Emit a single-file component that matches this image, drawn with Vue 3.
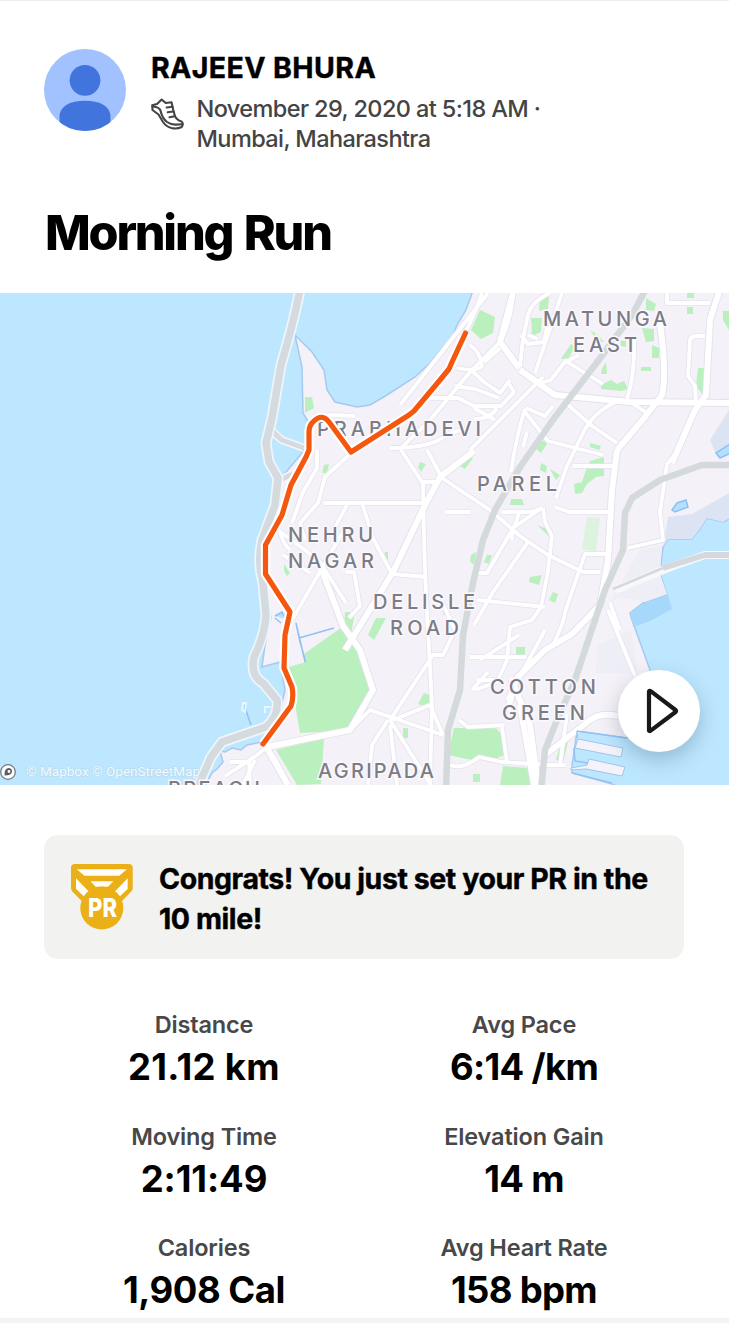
<script setup>
const stats = [
  { label: 'Distance', value: '21.12 km', fit: 'wide' },
  { label: 'Avg Pace', value: '6:14 /km', fit: 'tight' },
  { label: 'Moving Time', value: '2:11:49', fit: 'loose' },
  { label: 'Elevation Gain', value: '14 m', fit: 'tight' },
  { label: 'Calories', value: '1,908 Cal', fit: 'normal' },
  { label: 'Avg Heart Rate', value: '158 bpm', fit: 'tight' },
]

const parks = [
  'M480 310l15 7-2 16-12 6-10-9z',
  'M540 298l9-2-1 13-9 2zM531 318l11 0-1 14-9 4zM646 298l10 6-2 7-8-1zM687 293h7v5h-7zM687 307h6v7h-6zM642 328l12 1 0 12-8 1zM652 345l7 3 0 10-7 0zM571 344l4 3-7 12-7 0zM602 369l4-7 1 12-6 0zM641 367h10v4h-10zM698 368l9 0-4 27-7-9zM601 385l10-5 6 4 7-3 4 8-7 2-20-2zM636 400l11-2-3 8zM590 330l8 5 6 7-6 0zM620 341l6-1 0 7-5-1z',
  'M723 311h6v19l-6-10z',
  'M305 397l7 0 2 11-9 5zM324 465l5-1-2 9-5 0zM420 462l6 2-5 8-3-5zM466 455l7 3-8 11-5-3zM538 440l10 2-7 11-5-4zM590 443l11 3-2 4-9-3zM590 461l14-4v19l-9 1-2-9-6 1zM541 463l6 3-1 7-6-3zM550 469l10 6-4 5zM511 499l11 0 2 6-14 0zM537 525l15 6 0 8z',
  'M587 467l10 3-2 8-8 6-5 9-7 1-1-10 8-2z',
  'M385 552l3 0 0 9-5-3zM471 555l5-3-2 13-4-4zM487 555l5 0-3 9-5-2zM284 564l6 9-3 3-3-5zM444 608l6 4-7 3zM530 577l12-2-3 10-10-3zM553 592l5 2-3 9-6-3zM376 618l10 0-12 22-6-5zM516 647h9v8h-9zM345 612l10 0-4 22-7-6z',
  'M305 653L341 628 356 650 373 692 350 730 300 733 295 704 289 667 306 662z',
  'M276 750L324 738 321 784 297 785z',
  'M454 728l42 0 9 11-1 16-16 7-9-5-7 3-24-5zM503 766l26 2 4 17-33 0zM559 749l9-7-5 20-7-2zM473 774h7v8h-7zM424 693l10 4-6 11-10-4zM403 728h5v10h-5z',
]

const minor = [
  'M488 293L430 367 400 405M513 293Q511 322 500 342L470 372 430 420 399 450',
  'M482 293Q472 322 462 338M550 293Q531 302 528 315L523 338 520 367M528 335l10 4M562 293L535 373M521 335L528 344 544 342 547 327',
  'M470 345Q481 353 482 366Q478 372 457 368M471 370L484 382 500 393 510 380M500 342L513 357M500 348L484 362M430 398h28l16 8h27l13-14-7-11M455 386l20 3 24 9M474 419q17 0 23-11M474 408l21 12M526 373l14 10 11-3 13-17 15-8',
  'M526 408l19 8 8-10M525 409q-9 28-14 63M525 412L548 441 603 455M523 447l4-15M470 450L543 377M603 384L590 376 564 360',
  'M567 404L592 426 617 443M620 400Q596 410 585 429L567 466 556 498M630 402L647 413M627 399Q635 375 634 340M667 293v10h43M705 336h-8q-7 0-7 5l-2 35 7 10 1 19M613 466h-40',
  'M390 448q33 0 49-8 13-10 27-10M401 450L422 482H437M427 450L442 478 490 510 520 536 548 555 583 572H600M314 417l18-2 23 1M317 450v18l-14 24-11 31M349 455L325 477 318 503 300 523 305 540',
  'M324 503H425M347 505L333 531M362 503L373 538 392 574 427 577M423 480Q424 568 428 630L432 705 430 785',
  'M278 530L305 550 320 562 346 603M283 555L310 573M346 572h8l6 34-11 12M292 620L344 530',
  'M445 512h25M519 513L515 525 487 573H476M528 542L493 592 474 625M555 507l14 5h40M543 508L545 522 552 536 548 571 541 607 532 620 510 627 507 660M542 508L513 528 512 540',
  'M502 512h30L542 508M477 600L545 607M607 554h-22L566 609Q563 625 554 643M628 548l22-5 13-3-3-28 7-48 12-14M440 598L455 630 443 655H433L390 720',
  'M610 603L620 630M608 610L635 676M545 630L507 700M507 660L497 682 475 690M470 657h56M477 680h22M472 690L488 672',
  'M290 550Q282 543 280 530M350 730L370 710 443 735M388 720L372 745 368 785M390 720L430 784M390 725L397 785M393 720L430 705M430 705L443 735M459 720l9 7 36-2M450 765Q463 770 479 757L502 762 550 765 565 765M502 727l5 35M560 765l7-51',
  'M266 748L253 758 225 776M255 760L243 785M270 752Q279 763 287 785M230 762l17 0 6-5M249 762l1 23M480 660L519 635',
]

const major = [
  'M520 370L555 395 630 402 729 403M513 293L500 342 519 368',
  'M660 323Q667 374 662 395L645 417 617 450M721 286L710 320 706 395 695 410 672 463',
  'M617 450L612 490 608 560 600 605 572 634 545 650 515 680 508 710M511 678L530 725 538 785',
  'M474 451L440 477 425 505 393 572 345 650M320 565L343 626 360 650 373 690 350 730 262 748M267 748L288 785',
  'M545 755L590 720Q601 712 618 716M520 705L534 785',
]

const rails = [
  'M647 287L632 315 595 365 555 417 520 467 495 510 483 540 473 583 463 635 460 690 448 730 446 790',
  'M735 465H702L660 480 632 498 625 513 623 550 605 590 575 680 557 720 545 750 541 790',
]

const piers = [
  'M578 739l45 9-2 9-46-9z',
  'M589 759l36 8-3 9-36-7-15 1 0-2 16-3z',
]

const coastRoad = 'M300 290Q293 325 281 365L272 418 266 443 269 462 278 478 275 505 262 540Q257 562 263 583L266 615Q265 635 254 657Q250 676 263 683L277 700Q279 716 266 727L222 742 211 757 197 789'
const routePath = 'M465.500 333L452 362 449 369 435 386 414 411 409 415 351 452 329 422Q322 413 314 421Q309 425 309 432V450L306 457 291 485 282 515 265.500 545V574L290 612 285 635 284 668 292 687Q294 697 291 706L263 744'
</script>

<template>
  <main class="page">
    <header class="athlete">
      <svg class="avatar" viewBox="0 0 82 82" aria-hidden="true">
        <defs><clipPath id="disc"><circle cx="41" cy="41" r="41" /></clipPath></defs>
        <g clip-path="url(#disc)">
          <rect width="82" height="82" fill="#a1c2fe" />
          <circle cx="41" cy="31.300" r="15.400" fill="#4174dd" />
          <path d="M15.500 82V66C17 57 26 51.800 41 51.800S65 57 66.500 66V82z" fill="#4174dd" />
        </g>
      </svg>
      <div class="who">
        <div class="name">RAJEEV BHURA</div>
        <div class="meta">
          <svg class="shoe" viewBox="0 0 34 32" fill="none" stroke="#444" stroke-width="2.100" stroke-linejoin="round" stroke-linecap="round" aria-hidden="true">
            <path d="M1.200 7.300L6 6 10.700 1.500 14.700 5 20.500 4.300 22.300 12 24 18.200Q25.500 22 30.500 23.500Q33 25.500 30.700 29Q26 31.300 20.500 30Q15 28.500 12 24L7.500 16.500 1.500 12z" />
            <path d="M2 8.500Q8 9 9.500 12.500Q11 20 16 24Q20 26.800 25 26.600L31 26.300M15.700 9.500L21.500 8.700M16.700 14.300L22.300 13.500M18.500 19.300L23.800 18.300" />
          </svg>
          <div class="when">November 29, 2020 at 5:18 AM ·<br>Mumbai, Maharashtra</div>
        </div>
      </div>
    </header>

    <h1>Morning Run</h1>

    <section class="map">
      <svg class="canvas" viewBox="0 293 729 492">
        <rect y="293" width="729" height="492" fill="#bde6ff" />
        <path class="land" d="M474 288L466 310 457 325 453 335 443 347 429 364 415 377 387 395 370 405 357 407 335 402 327 390 324 370 312 352 295 335 302 367 303 413 309 423 303 452 281 478 276 510 262 533 260 560 266 590 271 617 265 645 262 667 280 662 285 690 278 720 262 742 247 745 241 750 232 748 225 752 220 751 223 762 217 769 212 773 203 790H625L612 784 572 773V765L577 731 627 738 650 715V670L632 620 630 613 643 603 667 595 660 573 663 547 668 539H692L699 530 707 518 723 522 735 516V288z" />
        <path d="M729 493L692 514 668 517 663 547 668 539H692L699 530 707 518 723 522 729 518zM729 410L710 440 717 457 729 450z" fill="#dce4f4" />
        <path d="M640 550l22-4-2 28 7 20-22 8-25-5-10 5zM597 645l34-15 7 43-42 0z" fill="#eeeef7" />
        <path class="inlet" d="M733 442L716 453 720 458 733 452zM672 510l5-7 9-3 2 7-13 5z" />
        <path class="inlet" d="M296 623l4 19 12 40-5-12zM299 638l35-10M275 616l7-4 4 7M275 618l6 5M244 705l7 20" />
        <path d="M631 612l13-9 24-8 4 14-22 12-17 6z" fill="#a6d8fc" />
        <path v-for="p in parks" :key="p" class="park" :d="p" />
        <path d="M587 517l13 1-4 34-14-3z" fill="#dcf3dd" />
        <g class="streets">
          <path v-for="r in minor" :key="r" class="minor-edge" :d="r" />
          <path v-for="r in major" :key="r" class="major-edge" :d="r" />
          <path v-for="r in minor" :key="r + 'f'" class="minor" :d="r" />
          <path v-for="r in major" :key="r + 'f'" class="major" :d="r" />
        </g>
        <path v-for="r in rails" :key="r" class="rail" :d="r" />
        <path v-for="r in piers" :key="r" class="pier" :d="r" />
        <path class="dock" d="M577 731l50 7M577 731v7M574 748l1 13 13 2M572 773l40 10" />
        <path class="bridge-edge" d="M735 555H705L668 568 615 590" />
        <path class="bridge" d="M735 555H705L663 568" />
        <path class="bridge thin" d="M663 568L613 589" />
        <path class="link-edge" d="M269 426Q275 435 282 440L304 448M280 480L293 474" />
        <path class="link" d="M269 426Q275 435 282 440L304 448M280 480L293 474" />
        <path class="coast-edge" :d="coastRoad" />
        <path class="coast" :d="coastRoad" />
        <path d="M243 703l3 0-1 9-3-2z M265 713v-6h6" fill="none" stroke="#e7f6ff" stroke-width="2" />
        <g class="labels">
          <text x="543" y="326" textLength="124">MATUNGA</text>
          <text x="573" y="352" textLength="64">EAST</text>
          <text x="317" y="436" textLength="164">PRABHADEVI</text>
          <text x="477" y="491" textLength="80">PAREL</text>
          <text x="288" y="542" textLength="85">NEHRU</text>
          <text x="288" y="568" textLength="86">NAGAR</text>
          <text x="373" y="609" textLength="102">DELISLE</text>
          <text x="390" y="635" textLength="69">ROAD</text>
          <text x="490" y="694" textLength="106">COTTON</text>
          <text x="502" y="720" textLength="83">GREEN</text>
          <text x="318" y="778" textLength="116">AGRIPADA</text>
          <text x="168" y="796" textLength="92">BREACH</text>
        </g>
        <g class="route">
          <path class="halo" :d="routePath" />
          <path :d="routePath" />
        </g>
        <g class="credit">
          <circle cx="8" cy="772" r="7.300" fill="#fff" stroke="#777d82" stroke-width="1.300" />
          <path d="M4.500 775.500Q4 768 9 768Q12.500 768.500 12 772Q11 775.500 4.500 775.500z" fill="#5a5f64" />
          <circle cx="9" cy="771.500" r="1.400" fill="#fff" />
          <text x="26" y="776" textLength="174">© Mapbox © OpenStreetMap</text>
        </g>
      </svg>
      <button class="play" aria-label="Play">
        <svg viewBox="0 0 82 82" aria-hidden="true"><path d="M31 21.500V60.500Q31.500 61.500 32.700 60.600L57.500 42Q58.500 41 57.500 40L32.700 21.200Q31.500 20.500 31 21.500z" fill="none" stroke="#191919" stroke-width="4.200" stroke-linejoin="round" /></svg>
      </button>
    </section>

    <section class="card">
      <svg class="medal" viewBox="0 0 62 66" aria-hidden="true">
        <path d="M4 0H57.700Q61.700 0 61.700 4V24Q61.700 26 60.300 27.500L51 37H10.700L1.400 27.500Q0 26 0 24V4Q0 0 4 0z" fill="#ebaf17" />
        <path d="M5.700 5.300H56L48.300 11.700H13.400zM19.400 17.300H42.300L37 22.700H24.700zM5 14.300L18.300 28 13.300 32.700 5 25zM56.700 14.300L43.400 28 48.400 32.700 56.700 25z" fill="#fffdf6" />
        <circle cx="30.800" cy="44" r="21.500" fill="#ebaf17" />
        <text x="17" y="53" textLength="29" lengthAdjust="spacingAndGlyphs">PR</text>
      </svg>
      <p>Congrats! You just set your PR in the<br>10 mile!</p>
    </section>

    <dl class="stats">
      <div v-for="s in stats" :key="s.label">
        <dt>{{ s.label }}</dt>
        <dd :class="s.fit">{{ s.value }}</dd>
      </div>
    </dl>
  </main>
</template>

<style>
body { margin: 0; background: #fff; }
</style>

<style scoped>
.page {
  box-sizing: border-box;
  width: 729px;
  height: 1323px;
  overflow: hidden;
  border-top: 1px solid #eee;
  border-bottom: 5px solid #f4f4f6;
  background: #fff;
  color: #000;
  font-family: Inter, "Liberation Sans", sans-serif;
  display: flex;
  flex-direction: column;
  white-space: nowrap;
}
.athlete { flex: none; display: flex; gap: 25px; height: 157px; padding: 48px 44px 0; box-sizing: border-box; }
.avatar { width: 82px; height: 82px; flex: none; }
.name { font-size: 28.500px; line-height: 36px; font-weight: 700; margin-top: 1px; letter-spacing: 0.4px; -webkit-text-stroke: 0.4px #000; }
.meta { display: flex; gap: 11.500px; margin-top: 8px; }
.shoe { width: 34px; height: 32px; flex: none; margin-top: 4px; }
.when { font-size: 23.500px; line-height: 29.500px; color: #444; font-weight: 450; letter-spacing: -0.6px; }
h1 { flex: none; margin: 0; height: 135px; box-sizing: border-box; padding: 45px 0 0 45px; font-size: 48.500px; line-height: 60px; font-weight: 800; letter-spacing: -2.200px; word-spacing: 3px; }
.map { position: relative; height: 492px; flex: none; }
.canvas { display: block; width: 729px; height: 492px; }
.land { fill: #f5f1f8; stroke: #a8c9ef; stroke-width: 1.500; }
.inlet { fill: #b4e0ff; stroke: #90c0f1; stroke-width: 1.500; }
.park { fill: #baf0bd; }
.streets path, .rail, .bridge, .bridge-edge, .link, .link-edge, .coast, .coast-edge { fill: none; stroke-linejoin: round; }
.minor { stroke: #fff; stroke-width: 3.800; }
.minor-edge { stroke: #e5e3ec; stroke-width: 5.400; }
.major { stroke: #fff; stroke-width: 6; }
.major-edge { stroke: #e3e1ea; stroke-width: 7.800; }
.rail { stroke: #d4d9db; stroke-width: 6.500; }
.pier { fill: #f5f2f9; stroke: #9bc8f1; }
.dock { fill: none; stroke: #92c3f3; stroke-width: 1.500; }
.bridge { stroke: #d5d9dd; stroke-width: 6; }
.bridge.thin { stroke-width: 2.500; }
.bridge-edge { stroke: #f8f8fa; stroke-width: 8; }
.link { stroke: #d5dade; stroke-width: 5; }
.link-edge { stroke: #f4f7fa; stroke-width: 8; }
.coast { stroke: #d4dadd; stroke-width: 7.500; }
.coast-edge { stroke: #eef6fb; stroke-width: 11; }
.labels text { font-size: 20px; fill: #7c7c86; font-weight: 450; stroke: #faf8fc; stroke-width: 3px; paint-order: stroke; }
.route path { fill: none; stroke: #f4570d; stroke-width: 5.200; stroke-linecap: round; stroke-linejoin: round; }
.route .halo { stroke: #fff; stroke-width: 9.500; stroke-linecap: butt; }
.credit text { font-family: Roboto, sans-serif; font-size: 13.500px; fill: #f2faff; stroke: #b2d4e8; stroke-width: 0.8px; paint-order: stroke; }
.play { position: absolute; left: 618px; top: 377px; width: 82px; height: 82px; padding: 0; border: 0; border-radius: 50%; background: #fff; box-shadow: 0 8px 20px rgba(30, 60, 80, .25); }
.play svg { display: block; width: 82px; height: 82px; }
.card { flex: none; box-sizing: border-box; margin: 50px 45px 0 44px; height: 124px; border-radius: 14px; background: #f2f2f0; display: flex; gap: 26px; padding: 24px 0 0 27px; }
.medal { width: 62px; height: 66px; flex: none; margin-top: 5px; }
.medal text { font-size: 26px; font-weight: 800; fill: #fff; }
.card p { margin: 0; font-size: 28.500px; line-height: 40px; font-weight: 700; letter-spacing: -0.43px; -webkit-text-stroke: 0.4px #000; }
.stats { flex: none; margin: 50px 45px 0 44px; display: grid; grid-template-columns: 320px 320px; grid-auto-rows: 111.500px; text-align: center; }
dt { font-size: 23.500px; line-height: 32px; font-weight: 600; color: #484848; letter-spacing: -0.15px; }
dd { margin: 0; padding-top: 3px; font-size: 36.500px; line-height: 46px; font-weight: 700; letter-spacing: -0.5px; }
dd.wide { letter-spacing: 0.3px; }
dd.loose { letter-spacing: -0.1px; }
dd.tight { letter-spacing: -0.7px; }
</style>
